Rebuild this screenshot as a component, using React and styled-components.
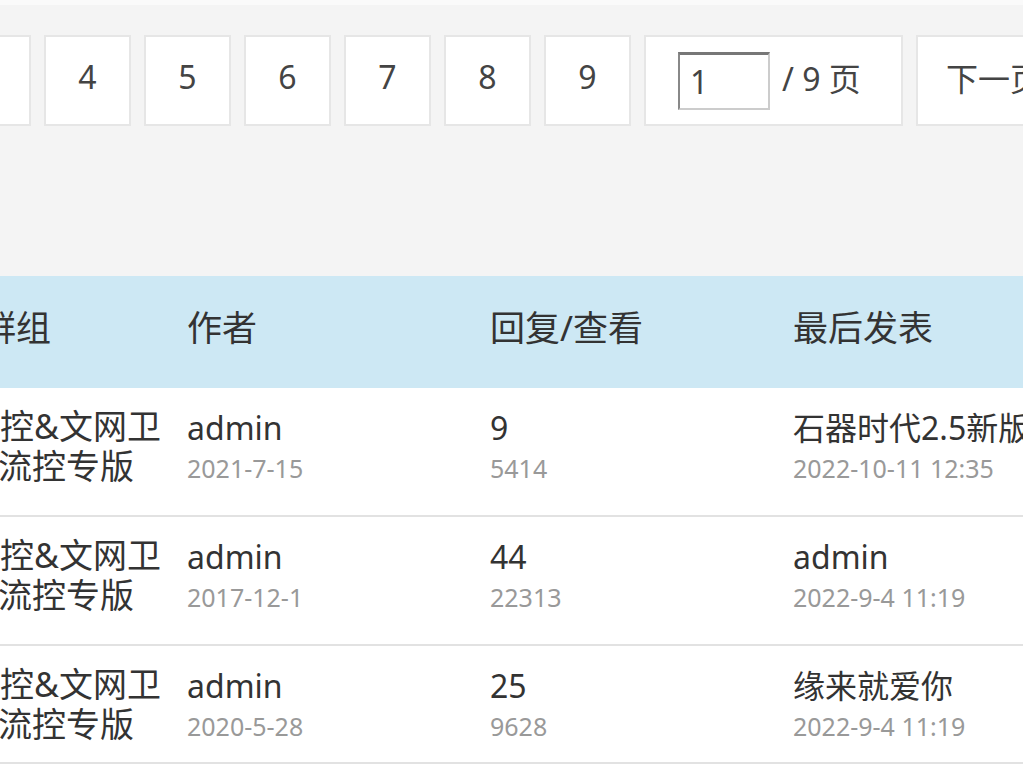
import React from "react";
import styled, { createGlobalStyle } from "styled-components";

const G = createGlobalStyle`
  html,body{margin:0;padding:0;overflow:hidden;width:1023px;height:764px;background:#f4f4f4;}
  *{box-sizing:border-box;}
  body{font-family:"Noto Sans","Noto Sans CJK SC",sans-serif;color:#333;}
`;
const Top = styled.div`height:276px;background:#f4f4f4;border-top:5px solid #fafafa;padding-top:30px;`;
const Pager = styled.div`display:flex;gap:13px;margin-left:-56px;white-space:nowrap;`;
const PBox = styled.div`
  flex:none;height:91px;width:${p=>p.w||87}px;background:#fff;border:2px solid #e6e6e6;
  display:flex;align-items:center;justify-content:${p=>p.left?"flex-start":"center"};
  padding-left:${p=>p.left?p.pl:0}px;font-size:32px;color:#444;padding-bottom:8px;
`;
const Inp = styled.div`width:92px;height:58px;border:2px solid #ccc;border-top:3px solid #777;border-left:2px solid #888;
  display:flex;align-items:center;padding-left:10px;font-size:32px;margin-right:12px;background:#fff;margin-top:8px;`;
const Table = styled.div`background:#fff;`;
const Row = styled.div`
  display:grid;grid-template-columns:187px 303px 303px 1fr;height:${p=>p.h}px;
  background:${p=>p.head?"#cde8f4":"#fff"};border-bottom:${p=>p.head?"none":"2px solid #e2e2e2"};
  align-items:${p=>p.head?"center":"start"};padding-top:${p=>p.head?0:18}px;overflow:hidden;
`;
const Cell = styled.div`white-space:nowrap;overflow:visible;margin-left:${p=>p.ml||0}px;`;
const HT = styled.div`font-size:35px;color:#333;padding-bottom:14px;`;
const Main = styled.div`font-size:32px;line-height:44px;color:#333;`;
const Sub = styled.div`font-size:25px;line-height:36px;color:#999;`;
const Forum = styled.div`font-size:34px;line-height:40px;color:#333;margin-left:${p=>p.ml}px;`;

const rows = [
  ["admin","2021-7-15","9","5414","石器时代2.5新版本","2022-10-11 12:35"],
  ["admin","2017-12-1","44","22313","admin","2022-9-4 11:19"],
  ["admin","2020-5-28","25","9628","缘来就爱你","2022-9-4 11:19"],
];

export default function App(){
  return <>
    <G/>
    <Top>
      <Pager>
        {["3","4","5","6","7","8","9"].map(n=><PBox key={n}>{n}</PBox>)}
        <PBox w={259} left pl={32}><Inp>1</Inp>/ 9 页</PBox>
        <PBox w={200} left pl={28}>下一页</PBox>
      </Pager>
    </Top>
    <Table>
      <Row head h={112}>
        <Cell ml={-19}><HT>群组</HT></Cell>
        <Cell><HT>作者</HT></Cell>
        <Cell><HT>回复/查看</HT></Cell>
        <Cell><HT>最后发表</HT></Cell>
      </Row>
      {rows.map((r,i)=><Row key={i} h={i===2?118:129}>
        <Cell><Forum ml={-34}>网控&amp;文网卫</Forum><Forum ml={-2}>流控专版</Forum></Cell>
        <Cell><Main>{r[0]}</Main><Sub>{r[1]}</Sub></Cell>
        <Cell><Main>{r[2]}</Main><Sub>{r[3]}</Sub></Cell>
        <Cell><Main>{r[4]}</Main><Sub>{r[5]}</Sub></Cell>
      </Row>)}
    </Table>
  </>;
}
